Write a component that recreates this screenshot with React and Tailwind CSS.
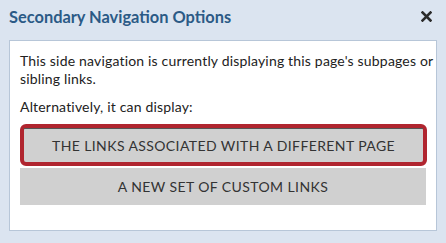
import React from "react";

function CloseIcon() {
  return (
    <svg width="11" height="11" viewBox="0 0 11 11" className="block">
      <path d="M1.5 1.5 L9.5 9.5 M9.5 1.5 L1.5 9.5" stroke="#2b2b2b" strokeWidth="2.6" strokeLinecap="square" />
    </svg>
  );
}

export default function App() {
  return (
    <div
      className="w-[446px] h-[243px] bg-[#dbe4f0] px-[9px] overflow-hidden"
      style={{ fontFamily: "Lato, 'Open Sans', sans-serif" }}
    >
      {/* header */}
      <div className="flex items-start justify-between pt-[7px] mb-[13px]">
        <div className="text-[16.4px] leading-[20px] font-bold text-[#2b5a86]">
          Secondary Navigation Options
        </div>
        <button className="mt-[4px] mr-[5px]">
          <CloseIcon />
        </button>
      </div>

      {/* body */}
      <div className="bg-white border border-[#b7c6d8] h-[191px] px-[10px] pt-[11px] text-[#222] text-[14px] tracking-[0.18px] leading-[17.8px]">
        <p className="-mr-[8px]">
          This side navigation is currently displaying this page's subpages or
          sibling links.
        </p>
        <p className="mt-[10px]">Alternatively, it can display:</p>

        <div className="mt-[9px] flex flex-col">
          <button className="-mr-px rounded-[6px] border-[4.5px] border-[#b0252f] bg-[#d0d0d0]">
            <div className="border-t border-[#555] h-[34px] flex items-center justify-center uppercase tracking-[0.4px] text-[#333] text-[14px]">
              The links associated with a different page
            </div>
          </button>
          <button className="mt-[2px] h-[37px] bg-[#d0d0d0] flex items-center justify-center uppercase tracking-[0.4px] text-[#333] text-[14px]">
            A new set of custom links
          </button>
        </div>
      </div>
    </div>
  );
}
